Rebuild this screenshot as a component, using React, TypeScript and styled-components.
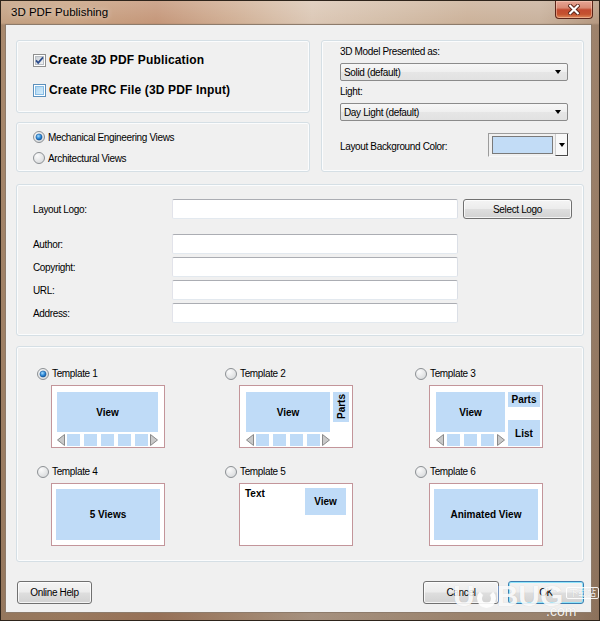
import React from 'react';
import styled, { createGlobalStyle } from 'styled-components';

const SANS = `"Liberation Sans", Arial, sans-serif`;
const BLUE = '#bfdbf7';

const GlobalStyle = createGlobalStyle`
  * { box-sizing: border-box; }
  html, body { margin: 0; padding: 0; background: #ffffff; overflow: hidden; }
  body { font-family: ${SANS}; font-size: 10px; letter-spacing: -0.35px; color: #000; }
`;

type Layout = 'strip' | 'parts' | 'partsList' | 'views' | 'text' | 'animated';

const templates: { id: number; layout: Layout; checked?: boolean }[] = [
  { id: 1, layout: 'strip', checked: true },
  { id: 2, layout: 'parts' },
  { id: 3, layout: 'partsList' },
  { id: 4, layout: 'views' },
  { id: 5, layout: 'text' },
  { id: 6, layout: 'animated' },
];

const infoFields = ['Author:', 'Copyright:', 'URL:', 'Address:'];

const CheckBox = ({ checked, hot }: { checked?: boolean; hot?: boolean }) => (
  <svg width="13" height="13" viewBox="0 0 13 13" style={{ flex: 'none' }}>
    <defs>
      <linearGradient id="cbGray" x1="0" y1="0" x2="1" y2="1">
        <stop offset="0" stopColor="#c9ced4" />
        <stop offset="1" stopColor="#f4f5f6" />
      </linearGradient>
      <linearGradient id="cbHot" x1="0" y1="0" x2="1" y2="1">
        <stop offset="0" stopColor="#a9d3f1" />
        <stop offset="1" stopColor="#d9eefb" />
      </linearGradient>
    </defs>
    <rect x="0.5" y="0.5" width="12" height="12" fill="#fff" stroke={hot ? '#5b8fbb' : '#8e8f8f'} />
    <rect
      x="2.5"
      y="2.5"
      width="8"
      height="8"
      fill={hot ? 'url(#cbHot)' : 'url(#cbGray)'}
      stroke={hot ? '#86bde6' : '#b9bec4'}
    />
    {checked && (
      <path d="M3 6.4 L5.2 8.9 L10 3.4" stroke="#2c4c8c" strokeWidth="1.7" fill="none" />
    )}
  </svg>
);

const Radio = ({ checked }: { checked?: boolean }) => (
  <svg width="12" height="12" viewBox="0 0 12 12" style={{ flex: 'none' }}>
    <defs>
      <radialGradient id="rdBg" cx="0.35" cy="0.3" r="0.8">
        <stop offset="0" stopColor="#fbfbfb" />
        <stop offset="1" stopColor="#d6d8da" />
      </radialGradient>
      <radialGradient id="rdDot" cx="0.4" cy="0.35" r="0.7">
        <stop offset="0" stopColor="#a6dcff" />
        <stop offset="0.55" stopColor="#2e8ad8" />
        <stop offset="1" stopColor="#114f95" />
      </radialGradient>
    </defs>
    <circle cx="6" cy="6" r="5.5" fill="url(#rdBg)" stroke="#8c9094" />
    {checked && <circle cx="6" cy="6" r="3.1" fill="url(#rdDot)" stroke="#1b5a9c" strokeWidth="0.6" />}
  </svg>
);

const NavArrow = ({ dir }: { dir: 'left' | 'right' }) => (
  <svg width="8" height="12" viewBox="0 0 8 12" style={{ flex: 'none' }}>
    <polygon
      points={dir === 'left' ? '7.5,0.5 7.5,11.5 0.5,6' : '0.5,0.5 0.5,11.5 7.5,6'}
      fill="#c9c9c9"
      stroke="#8a8a8a"
    />
  </svg>
);

const Strip = ({ count }: { count: number }) => (
  <StripRow>
    <NavArrow dir="left" />
    <Thumbs>
      {Array.from({ length: count }).map((_, i) => (
        <Thumb key={i} />
      ))}
    </Thumbs>
    <NavArrow dir="right" />
  </StripRow>
);

const TemplatePreview = ({ layout }: { layout: Layout }) => {
  switch (layout) {
    case 'strip':
      return (
        <PreviewFrame $pad="6px 6px 0 5px">
          <PreviewColumn>
            <Fill $h={40}>View</Fill>
            <Strip count={5} />
          </PreviewColumn>
        </PreviewFrame>
      );
    case 'parts':
      return (
        <PreviewFrame $pad="6px 5px 0 6px">
          <PreviewGrid $cols="84px 16px">
            <PreviewColumn>
              <Fill $h={40}>View</Fill>
              <Strip count={4} />
            </PreviewColumn>
            <Fill $h={30}>
              <Vertical>Parts</Vertical>
            </Fill>
          </PreviewGrid>
        </PreviewFrame>
      );
    case 'partsList':
      return (
        <PreviewFrame $pad="6px 5px 0 6px">
          <PreviewGrid $cols="69px 32px">
            <PreviewColumn>
              <Fill $h={40}>View</Fill>
              <Strip count={3} />
            </PreviewColumn>
            <SideColumn>
              <Fill $h={15}>Parts</Fill>
              <Fill $h={26}>List</Fill>
            </SideColumn>
          </PreviewGrid>
        </PreviewFrame>
      );
    case 'text':
      return (
        <PreviewFrame $pad="4px 6px 0 5px">
          <TextLayout>
            <span>Text</span>
            <Fill $h={27} $w={41}>View</Fill>
          </TextLayout>
        </PreviewFrame>
      );
    case 'views':
      return (
        <PreviewFrame $pad="5px 4px">
          <Fill>5 Views</Fill>
        </PreviewFrame>
      );
    default:
      return (
        <PreviewFrame $pad="5px 4px">
          <Fill>Animated View</Fill>
        </PreviewFrame>
      );
  }
};

export default function App() {
  return (
    <>
      <GlobalStyle />
      <Window>
        <TitleBar>
          <Title>3D PDF Publishing</Title>
          <CloseButton>
            <svg width="12" height="11" viewBox="0 0 12 11">
              <path d="M2.2 1.8 L9.8 9.2 M9.8 1.8 L2.2 9.2" stroke="#5a2418" strokeWidth="4" strokeLinecap="square" />
              <path d="M2.2 1.8 L9.8 9.2 M9.8 1.8 L2.2 9.2" stroke="#fff" strokeWidth="2.2" strokeLinecap="square" />
            </svg>
          </CloseButton>
        </TitleBar>

        <Client>
          <TopRow>
            <LeftStack>
              <CheckPanel>
                <CheckRow>
                  <CheckBox checked />
                  Create 3D PDF Publication
                </CheckRow>
                <CheckRow>
                  <CheckBox hot />
                  Create PRC File (3D PDF Input)
                </CheckRow>
              </CheckPanel>
              <RadioPanel>
                <RadioRow>
                  <Radio checked />
                  Mechanical Engineering Views
                </RadioRow>
                <RadioRow>
                  <Radio />
                  Architectural Views
                </RadioRow>
              </RadioPanel>
            </LeftStack>

            <SettingsPanel>
              <Caption>3D Model Presented as:</Caption>
              <Combo>
                Solid (default)
                <ComboArrow />
              </Combo>
              <Caption>Light:</Caption>
              <Combo>
                Day Light (default)
                <ComboArrow />
              </Combo>
              <ColorRow>
                <ColorLabel>Layout Background Color:</ColorLabel>
                <ColorPicker>
                  <Swatch />
                  <DropButton>
                    <ComboArrow />
                  </DropButton>
                </ColorPicker>
              </ColorRow>
            </SettingsPanel>
          </TopRow>

          <InfoPanel>
            <LogoRow>
              <FieldLabel>Layout Logo:</FieldLabel>
              <TextBox />
              <PushButton $w={109} $h={20}>
                Select Logo
              </PushButton>
            </LogoRow>
            <FieldList>
              {infoFields.map((f) => (
                <FieldRow key={f}>
                  <FieldLabel>{f}</FieldLabel>
                  <TextBox />
                </FieldRow>
              ))}
            </FieldList>
          </InfoPanel>

          <TemplatePanel>
            {templates.map((t) => (
              <TemplateCell key={t.id}>
                <TemplateLabel>
                  <Radio checked={t.checked} />
                  Template {t.id}
                </TemplateLabel>
                <TemplatePreview layout={t.layout} />
              </TemplateCell>
            ))}
          </TemplatePanel>

          <Footer>
            <PushButton $w={75}>Online Help</PushButton>
            <Spacer />
            <PushButton $w={76}>Cancel</PushButton>
            <PushButton $w={76} $default>
              OK
            </PushButton>
          </Footer>
        </Client>

        <Watermark>
          <WmBig>
            U<WmFace />BUG
          </WmBig>
          <WmTag>下载站</WmTag>
          <WmCom>.com</WmCom>
        </Watermark>
      </Window>
    </>
  );
}

const Window = styled.div`
  position: relative;
  width: 600px;
  height: 621px;
  display: flex;
  flex-direction: column;
  padding: 0 7px 7px 4px;
  border: 1px solid #2e241b;
  background:
    linear-gradient(180deg, rgba(255, 255, 255, 0.16) 0, rgba(255, 255, 255, 0) 22px, rgba(60, 38, 20, 0.2) 24px, rgba(60, 38, 20, 0.34) 100%),
    linear-gradient(90deg, #c3a183 0%, #c9a383 12%, #c5977a 26%, #d2b298 40%, #dcc8b6 52%, #d4bea9 64%, #ccb29a 78%, #c9b29d 90%, #b59880 100%);
  overflow: hidden;
`;

const TitleBar = styled.div`
  height: 23px;
  display: flex;
  align-items: flex-start;
  justify-content: space-between;
  padding-left: 6px;
`;

const Title = styled.span`
  margin-top: 4px;
  font: 11.5px ${SANS};
  letter-spacing: 0;
  line-height: 14px;
  color: #000;
  text-shadow: 0 0 6px rgba(255, 255, 255, 0.6);
`;

const CloseButton = styled.div`
  width: 38px;
  height: 18px;
  margin-right: -1px;
  display: flex;
  align-items: center;
  justify-content: center;
  border: 1px solid #5b2419;
  border-top: none;
  border-radius: 0 0 4px 4px;
  background: linear-gradient(180deg, #e7a595 0%, #d88a74 40%, #c24a30 52%, #c4522f 78%, #df8a5a 100%);
  box-shadow: inset 0 0 0 1px rgba(255, 220, 200, 0.45);
`;

const Client = styled.div`
  flex: 1;
  display: flex;
  flex-direction: column;
  padding: 15px 7px 8px 10px;
  background: #f0f0f0;
  border: 1px solid #8d7b6b;
`;

const GroupBox = styled.div`
  border: 1px solid #d5dfe5;
  border-radius: 3px;
  box-shadow: inset 0 0 0 1px #fbfcfd;
`;

const TopRow = styled.div`
  display: grid;
  grid-template-columns: 294px 263px;
  column-gap: 11px;
  height: 132px;
`;

const LeftStack = styled.div`
  display: flex;
  flex-direction: column;
  gap: 9px;
`;

const CheckPanel = styled(GroupBox)`
  height: 73px;
  display: flex;
  flex-direction: column;
  gap: 14px;
  padding: 11px 0 0 16px;
`;

const CheckRow = styled.div`
  height: 16px;
  display: flex;
  align-items: center;
  gap: 3px;
  font: bold 12px ${SANS};
  letter-spacing: 0.15px;
`;

const RadioPanel = styled(GroupBox)`
  flex: 1;
  display: flex;
  flex-direction: column;
  gap: 7px;
  padding: 7px 0 0 16px;
`;

const RadioRow = styled.div`
  height: 14px;
  display: flex;
  align-items: center;
  gap: 3px;
`;

const SettingsPanel = styled(GroupBox)`
  display: flex;
  flex-direction: column;
  padding: 4px 0 0 18px;
`;

const Caption = styled.div`
  height: 14px;
  line-height: 14px;
`;

const Combo = styled.div`
  width: 228px;
  height: 18px;
  margin: 4px 0;
  padding: 0 6px 0 3px;
  display: flex;
  align-items: center;
  justify-content: space-between;
  border: 1px solid #8b8b8b;
  border-radius: 2px;
  background: linear-gradient(180deg, #f7f7f7 0%, #efefef 50%, #e6e6e6 51%, #e2e2e2 100%);
`;

const ComboArrow = styled.span`
  width: 0;
  height: 0;
  border-left: 3.5px solid transparent;
  border-right: 3.5px solid transparent;
  border-top: 4px solid #000;
`;

const ColorRow = styled.div`
  margin-top: 8px;
  height: 24px;
  display: flex;
  align-items: center;
`;

const ColorLabel = styled.span`
  width: 148px;
  padding-top: 3px;
`;

const ColorPicker = styled.div`
  width: 81px;
  height: 24px;
  display: flex;
  gap: 2px;
  padding: 2px 0 0 3px;
  border: 1px solid;
  border-color: #9c9c9c #f8f8f8 #f8f8f8 #9c9c9c;
  background: #f0f0f0;
`;

const Swatch = styled.div`
  width: 61px;
  height: 18px;
  border: 1px solid #7a7a7a;
  background: #c2dcf6;
`;

const DropButton = styled.div`
  flex: 1;
  margin-top: -2px;
  display: flex;
  align-items: center;
  justify-content: center;
  background: #f9f9f9;
  border-left: 1px solid #cfcfcf;
  border-right: 1px solid #4a4a4a;
  border-bottom: 1px solid #4a4a4a;
`;

const InfoPanel = styled(GroupBox)`
  margin-top: 12px;
  height: 152px;
  padding: 14px 0 0 16px;
`;

const LogoRow = styled.div`
  height: 20px;
  display: flex;
  align-items: center;
  margin-bottom: 15px;
`;

const FieldList = styled.div`
  display: flex;
  flex-direction: column;
  gap: 3px;
`;

const FieldRow = styled.div`
  height: 20px;
  display: flex;
  align-items: center;
`;

const FieldLabel = styled.span`
  width: 139px;
`;

const TextBox = styled.div`
  width: 286px;
  height: 20px;
  border: 1px solid;
  border-color: #abadb3 #dbdfe6 #e3e9ef #e2e3ea;
  border-radius: 2px;
  background: #fff;
`;

const PushButton = styled.div<{ $w: number; $h?: number; $default?: boolean }>`
  width: ${(p) => p.$w}px;
  height: ${(p) => p.$h ?? 23}px;
  margin-left: ${(p) => (p.$h ? 5 : 0)}px;
  display: flex;
  align-items: center;
  justify-content: center;
  border: 1px solid ${(p) => (p.$default ? '#3c7fb1' : '#707070')};
  border-radius: 3px;
  background: linear-gradient(180deg, #f4f4f4 0%, #ececec 48%, #dedede 52%, #d2d2d2 100%);
  box-shadow: inset 0 0 0 1px ${(p) => (p.$default ? '#8fe4fb' : 'rgba(255, 255, 255, 0.75)')};
`;

const TemplatePanel = styled(GroupBox)`
  margin-top: 10px;
  height: 216px;
  padding: 20px 0 0 20px;
  display: grid;
  grid-template-columns: 188px 190px 1fr;
  grid-auto-rows: min-content;
  row-gap: 17px;
`;

const TemplateCell = styled.div`
  display: flex;
  flex-direction: column;
  gap: 5px;
`;

const TemplateLabel = styled.div`
  height: 13px;
  display: flex;
  align-items: center;
  gap: 3px;
`;

const PreviewFrame = styled.div<{ $pad: string }>`
  width: 114px;
  height: 63px;
  margin-left: 14px;
  display: flex;
  flex-direction: column;
  padding: ${(p) => p.$pad};
  border: 1px solid #c3959a;
  background: #fff;
  font: bold 10px ${SANS};
  letter-spacing: 0;
`;

const PreviewColumn = styled.div`
  display: flex;
  flex-direction: column;
  gap: 2px;
`;

const PreviewGrid = styled.div<{ $cols: string }>`
  display: grid;
  grid-template-columns: ${(p) => p.$cols};
  column-gap: 3px;
  align-items: start;
`;

const SideColumn = styled.div`
  height: 54px;
  display: flex;
  flex-direction: column;
  justify-content: space-between;
`;

const TextLayout = styled.div`
  display: flex;
  justify-content: space-between;
  align-items: flex-start;
  line-height: 12px;
`;

const Fill = styled.div<{ $h?: number; $w?: number }>`
  ${(p) => (p.$h ? `height: ${p.$h}px;` : 'flex: 1;')}
  ${(p) => (p.$w ? `width: ${p.$w}px;` : '')}
  display: flex;
  align-items: center;
  justify-content: center;
  background: ${BLUE};
  color: #000;
`;

const Vertical = styled.span`
  writing-mode: vertical-rl;
  transform: rotate(180deg);
`;

const StripRow = styled.div`
  height: 12px;
  display: flex;
  align-items: center;
  justify-content: space-between;
`;

const Thumbs = styled.div`
  display: flex;
  gap: 4px;
`;

const Thumb = styled.div`
  width: 13px;
  height: 12px;
  background: ${BLUE};
`;

const Footer = styled.div`
  margin-top: auto;
  display: flex;
  align-items: center;
  gap: 9px;
  padding-left: 1px;
`;

const Spacer = styled.div`
  flex: 1;
`;

const Watermark = styled.div`
  position: absolute;
  left: 452px;
  top: 578px;
  width: 148px;
  height: 43px;
  pointer-events: none;
  color: rgba(255, 255, 255, 0.9);
  letter-spacing: 0;
  text-shadow: 0 0 1px rgba(0, 0, 0, 0.15);
`;

const WmBig = styled.div`
  display: flex;
  align-items: center;
  font: bold 30px ${SANS};
  line-height: 34px;
`;

const WmFace = styled.span`
  width: 19px;
  height: 19px;
  margin: 4px 1px 0 2px;
  border-radius: 50%;
  border: 5px solid rgba(255, 255, 255, 0.9);
  border-top-color: transparent;
`;

const WmTag = styled.span`
  position: absolute;
  right: 2px;
  top: 8px;
  padding: 0 2px;
  border: 1px solid rgba(255, 255, 255, 0.9);
  border-radius: 2px;
  font: 9px "Noto Sans CJK SC", sans-serif;
  line-height: 10px;
`;

const WmCom = styled.span`
  position: absolute;
  left: 93px;
  top: 24px;
  font: 14px ${SANS};
  line-height: 16px;
`;
